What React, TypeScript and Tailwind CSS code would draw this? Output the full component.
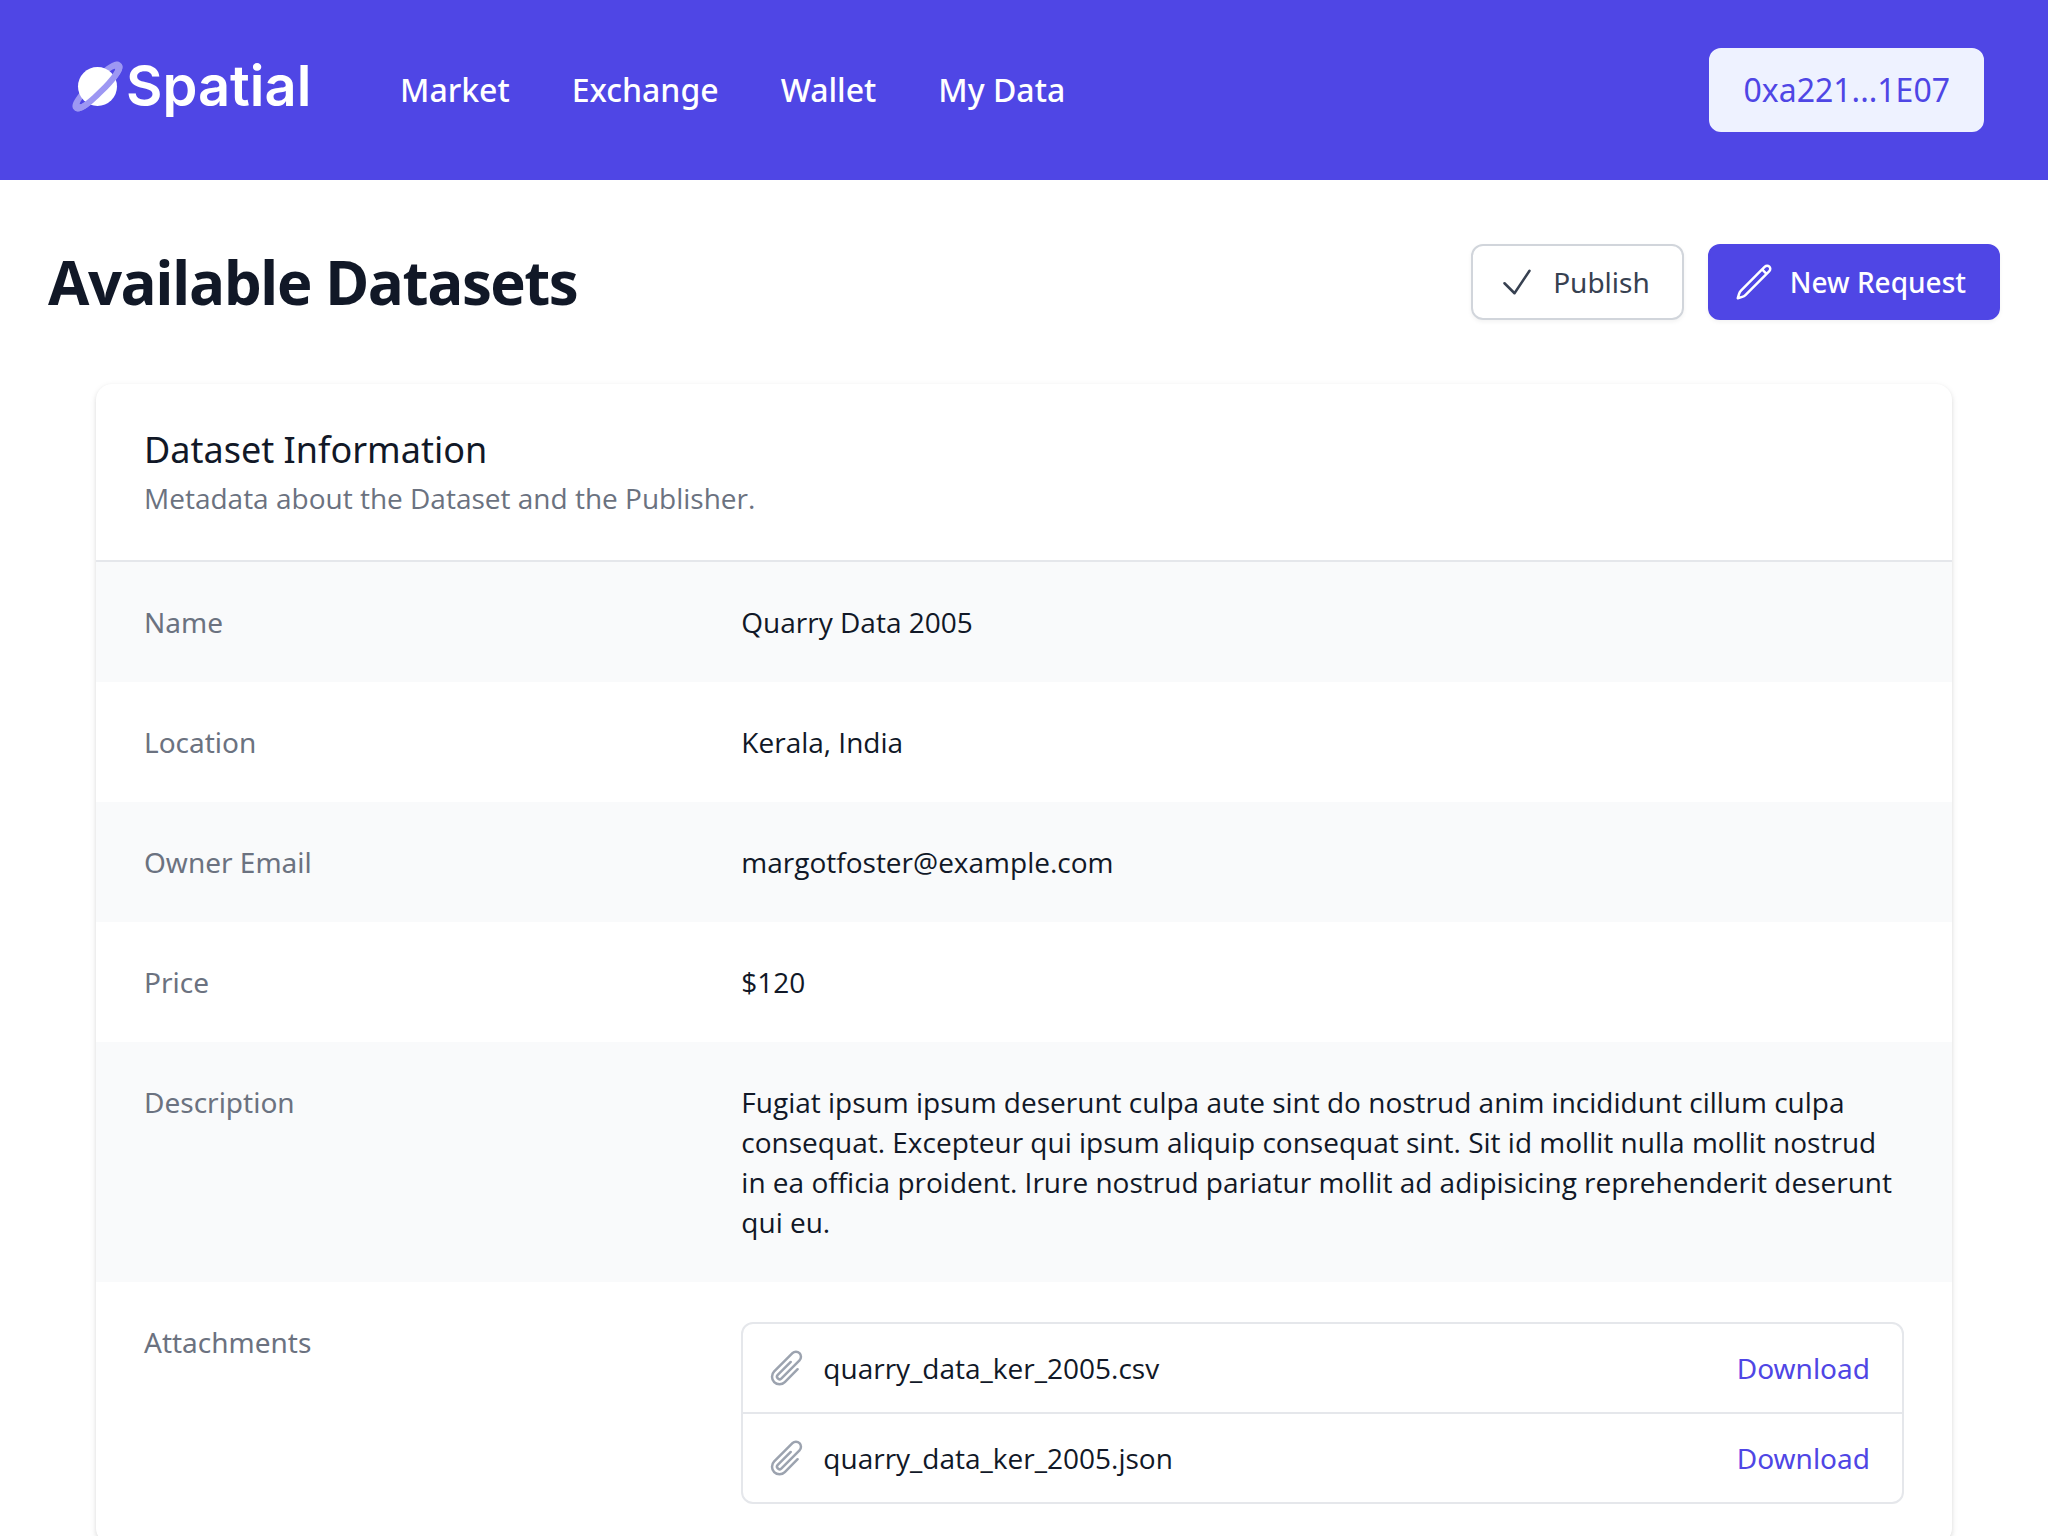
const files = ["quarry_data_ker_2005.csv", "quarry_data_ker_2005.json"];

const navItems = ["Market", "Exchange", "Wallet", "My Data"];

const details = [
  { label: "Name", value: "Quarry Data 2005" },
  { label: "Location", value: "Kerala, India" },
  { label: "Owner Email", value: "margotfoster@example.com" },
  { label: "Price", value: "$120" },
  {
    label: "Description",
    value:
      "Fugiat ipsum ipsum deserunt culpa aute sint do nostrud anim incididunt cillum culpa consequat. Excepteur qui ipsum aliquip consequat sint. Sit id mollit nulla mollit nostrud in ea officia proident. Irure nostrud pariatur mollit ad adipisicing reprehenderit deserunt qui eu.",
  },
];

function Logo() {
  return (
    <a href="#" className="flex w-68 items-center pb-2 pl-0.5">
      <svg viewBox="0 0 60 66" className="h-[66px] w-[60px] shrink-0" aria-hidden="true">
        <g transform="translate(31.5 33.5) rotate(-45)">
          <path
            fill="#9d97f3"
            fillRule="evenodd"
            d="M-33 0C-33 -5 -28 -9 0 -9C28 -9 33 -5 33 0C33 5 28 9 0 9C-28 9 -33 5 -33 0ZM-25 0A25 3 0 0 0 25 0A25 3 0 0 0 -25 0Z"
          />
          <circle r="19.5" fill="#fff" />
          <path fill="#9d97f3" d="M-33 0C-33 5 -28 9 0 9C28 9 33 5 33 0L25 0A25 3 0 0 1 -25 0Z" />
        </g>
      </svg>
      <span className="font-['Inter',sans-serif] text-[56px] leading-none font-semibold">Spatial</span>
    </a>
  );
}

function CheckIcon() {
  return (
    <svg viewBox="0 0 24 24" className="size-10" fill="none" stroke="currentColor" strokeWidth="1.5" strokeLinecap="round" strokeLinejoin="round" aria-hidden="true">
      <path d="M4.5 12.75l6 6 9-13.5" />
    </svg>
  );
}

function PencilIcon() {
  return (
    <svg viewBox="0 0 24 24" className="size-10" fill="none" stroke="currentColor" strokeWidth="1.5" strokeLinecap="round" strokeLinejoin="round" aria-hidden="true">
      <path d="M16.862 4.487l1.687-1.688a1.875 1.875 0 112.652 2.652L6.832 19.82a4.5 4.5 0 01-1.897 1.13l-2.685.8.8-2.685a4.5 4.5 0 011.13-1.897L16.863 4.487zm0 0L19.5 7.125" />
    </svg>
  );
}

function ClipIcon() {
  return (
    <svg viewBox="0 0 24 24" className="size-10 shrink-0 text-[#9ca3af]" fill="none" stroke="currentColor" strokeWidth="1.5" strokeLinecap="round" strokeLinejoin="round" aria-hidden="true">
      <path d="M18.375 12.739l-7.693 7.693a4.5 4.5 0 01-6.364-6.364l10.94-10.94A3 3 0 1119.5 7.372L8.552 18.32m.009-.01l-.01.01m5.699-9.941l-7.81 7.81a1.5 1.5 0 002.112 2.13" />
    </svg>
  );
}

export default function App() {
  return (
    <div className="min-h-screen bg-white font-['Open_Sans',sans-serif] text-[28px] leading-10 text-[#111827]">
      <header className="flex items-center bg-[#4f46e5] px-16 py-12 font-['Noto_Sans',sans-serif] text-[32px] leading-12 font-medium text-white">
        <Logo />
        <nav className="ml-16 flex gap-[62px]">
          {navItems.map((item) => (
            <a key={item} href="#">
              {item}
            </a>
          ))}
        </nav>
        <button type="button" className="ml-auto rounded-xl border-2 border-[#eef2ff] bg-[#eef2ff] px-8 py-4 font-normal text-[#4f46e5]">
          0xa221...1E07
        </button>
      </header>

      <main className="px-12 pt-16">
        <div className="flex items-center justify-between">
          <h1 className="text-[60px] leading-[72px] font-bold tracking-tight">Available Datasets</h1>
          <div className="flex gap-6 font-['Noto_Sans',sans-serif]">
            <button type="button" className="flex items-center gap-4 rounded-xl border-2 border-[#d1d5db] px-6 py-4 pr-8 text-[#374151] shadow-[0_2px_4px_rgba(0,0,0,0.05)]">
              <CheckIcon />
              Publish
            </button>
            <button type="button" className="flex items-center gap-4 rounded-xl border-2 border-[#4f46e5] bg-[#4f46e5] px-6 py-4 pr-8 font-medium text-white shadow-[0_2px_4px_rgba(0,0,0,0.05)]">
              <PencilIcon />
              New Request
            </button>
          </div>
        </div>

        <section className="mx-12 mt-16 overflow-hidden rounded-2xl bg-white shadow-[0_2px_6px_rgba(0,0,0,0.1),0_2px_4px_rgba(0,0,0,0.06)]">
          <div className="px-12 py-[42px]">
            <h2 className="font-['Noto_Sans',sans-serif] text-[36px] leading-12">Dataset Information</h2>
            <p className="mt-1 text-[#6b7280]">Metadata about the Dataset and the Publisher.</p>
          </div>
          <dl className="border-t-2 border-[#e5e7eb]">
            {details.map(({ label, value }) => (
              <div key={label} className="grid grid-cols-3 gap-8 px-12 py-10 odd:bg-[#f9fafb]">
                <dt className="font-['Noto_Sans',sans-serif] text-[#6b7280]">{label}</dt>
                <dd className="col-span-2">{value}</dd>
              </div>
            ))}
            <div className="grid grid-cols-3 gap-8 px-12 py-10">
              <dt className="font-['Noto_Sans',sans-serif] text-[#6b7280]">Attachments</dt>
              <dd className="col-span-2">
                <ul className="divide-y-2 divide-[#e5e7eb] rounded-xl border-2 border-[#e5e7eb]">
                  {files.map((file) => (
                    <li key={file} className="flex items-center py-6 pr-8 pl-6">
                      <ClipIcon />
                      <span className="ml-4 flex-1">{file}</span>
                      <a href="#" className="font-['Noto_Sans',sans-serif] text-[#4f46e5]">
                        Download
                      </a>
                    </li>
                  ))}
                </ul>
              </dd>
            </div>
          </dl>
        </section>
      </main>
    </div>
  );
}
